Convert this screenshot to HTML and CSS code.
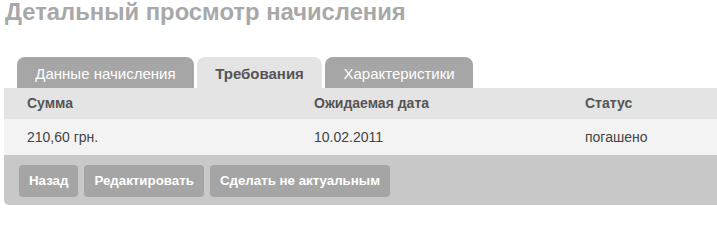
FILE: index.html
```html
<!DOCTYPE html>
<html lang="ru">
<head>
<meta charset="utf-8">
<title>Детальный просмотр начисления</title>
<link rel="stylesheet" href="styles.css">
</head>
<body>
<div class="page">
  <h1 class="title">Детальный просмотр начисления</h1>
  <div class="tabs">
    <div class="tab">Данные начисления</div>
    <div class="tab active">Требования</div>
    <div class="tab">Характеристики</div>
  </div>
  <div class="panel">
    <div class="row head">
      <div class="cell">Сумма</div>
      <div class="cell">Ожидаемая дата</div>
      <div class="cell">Статус</div>
    </div>
    <div class="row data">
      <div class="cell">210,60 грн.</div>
      <div class="cell">10.02.2011</div>
      <div class="cell">погашено</div>
    </div>
    <div class="actions">
      <span class="btn">Назад</span>
      <span class="btn">Редактировать</span>
      <span class="btn">Сделать не актуальным</span>
    </div>
  </div>
</div>
</body>
</html>
```
FILE: styles.css
```css
html, body {
  margin: 0;
  padding: 0;
  background: #ffffff;
  overflow: hidden;
}
.page {
  font-family: "Liberation Sans", Arial, sans-serif;
  padding-left: 4px;
  width: 760px;
}
.title {
  margin: 0 0 0 1px;
  font-size: 23.8px;
  line-height: 24px;
  font-weight: bold;
  color: #a8a8a8;
  white-space: nowrap;
}
.tabs {
  display: flex;
  gap: 3px;
  margin-top: 33px;
  padding-left: 13px;
}
.tab {
  height: 31px;
  line-height: 33px;
  padding: 0 18.3px;
  font-size: 15px;
  color: #ffffff;
  background: #a6a6a6;
  border-radius: 8px 8px 0 0;
}
.tab.active {
  background: #e4e4e4;
  color: #555555;
  font-weight: bold;
}
.panel {
  width: 740px;
  border-radius: 0 0 5px 5px;
  background: #c8c8c8;
}
.row {
  display: grid;
  grid-template-columns: 287px 271px 1fr;
  padding-left: 23px;
  font-size: 14px;
}
.row.head {
  height: 31px;
  line-height: 31px;
  background: #e4e4e4;
  color: #555555;
  font-weight: bold;
}
.row.data {
  height: 36px;
  line-height: 36px;
  background: #f3f3f3;
  color: #444444;
}
.actions {
  display: flex;
  gap: 6px;
  padding: 10px 15px 8px;
}
.btn {
  height: 32px;
  line-height: 32px;
  padding: 0 10px;
  background: #a5a5a5;
  color: #ffffff;
  font-size: 13.3px;
  font-weight: bold;
  border-radius: 4px;
}
```
